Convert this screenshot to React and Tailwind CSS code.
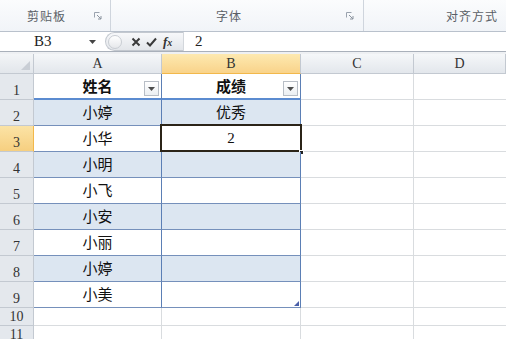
const rows = [
  { n: 1, a: "姓名", b: "成绩", head: true },
  { n: 2, a: "小婷", b: "优秀", band: true },
  { n: 3, a: "小华", b: "2", selected: true },
  { n: 4, a: "小明", b: "", band: true },
  { n: 5, a: "小飞", b: "" },
  { n: 6, a: "小安", b: "", band: true },
  { n: 7, a: "小丽", b: "" },
  { n: 8, a: "小婷", b: "", band: true },
  { n: 9, a: "小美", b: "", last: true },
];

const cjk = { fontFamily: '"Noto Sans CJK SC", "Noto Sans", sans-serif' };
const serif = { fontFamily: '"Liberation Serif", "Noto Sans CJK SC", serif' };

function Launcher() {
  return (
    <svg width="8" height="8" viewBox="0 0 8 8" className="shrink-0">
      <path d="M0.5 0.5h5M0.5 0.5v5" stroke="#9aa3ae" strokeWidth="1" fill="none" />
      <path d="M3 3l4 4M7 4v3H4" stroke="#8a939e" strokeWidth="1" fill="none" />
    </svg>
  );
}

function FilterButton() {
  return (
    <div className="absolute right-[2px] top-[7px] flex h-[15px] w-[15px] items-center justify-center border border-[#b8bec6] bg-gradient-to-b from-white to-[#eceff2]">
      <svg width="7" height="4" viewBox="0 0 7 4">
        <path d="M0 0h7L3.5 4z" fill="#4d4d4d" />
      </svg>
    </div>
  );
}

function Ribbon() {
  return (
    <div className="flex h-[32px] shrink-0 border-b border-[#b9c1cc] bg-gradient-to-b from-[#fbfcfd] to-[#f1f4f8] text-[12px] text-[#5a5f66]" style={cjk}>
      <div className="flex w-[111px] items-center border-r border-[#cfd5dd] pl-[27px] pr-[8px] pt-[1px]">
        <span className="flex-1 tracking-[1px]">剪贴板</span>
        <Launcher />
      </div>
      <div className="flex w-[253px] items-center border-r border-[#cfd5dd] pl-[105px] pr-[9px] pt-[1px]">
        <span className="flex-1 tracking-[1px]">字体</span>
        <Launcher />
      </div>
      <div className="flex flex-1 items-center justify-end pr-[8px] pt-[1px]">
        <span className="tracking-[1px]">对齐方式</span>
      </div>
    </div>
  );
}

function FormulaBar() {
  return (
    <div className="flex h-[20px] shrink-0 border-b border-[#a9b0ba] bg-white">
      <div className="flex w-[105px] items-center">
        <span className="w-[82px] pl-[34px] text-[15px] leading-none text-[#222]" style={serif}>B3</span>
        <svg width="7" height="4" viewBox="0 0 7 4" className="ml-[7px]">
          <path d="M0 0h7L3.5 4z" fill="#444" />
        </svg>
      </div>
      <div className="flex w-[78px] items-center rounded-l-full border border-r-0 border-[#c3c8cf] bg-gradient-to-b from-[#f7f8fa] to-[#e3e6ea]">
        <div className="ml-[2px] h-[14px] w-[14px] rounded-full border border-[#c9cdd3] bg-gradient-to-b from-white to-[#e6e8eb]" />
        <svg width="10" height="10" viewBox="0 0 10 10" className="ml-[9px]">
          <path d="M1.5 1.5l7 7M8.5 1.5l-7 7" stroke="#3a3a3a" strokeWidth="2" />
        </svg>
        <svg width="11" height="10" viewBox="0 0 11 10" className="ml-[5px]">
          <path d="M1 5.5l3 3L10 1.5" stroke="#3a3a3a" strokeWidth="2" fill="none" />
        </svg>
        <span className="ml-[6px] text-[13px] font-bold italic leading-none text-[#333]" style={serif}>
          f<span className="text-[10px]">x</span>
        </span>
      </div>
      <div className="flex flex-1 items-center border-l border-[#d3d7dc] pl-[11px] text-[15px] text-[#222]" style={serif}>
        2
      </div>
    </div>
  );
}

function ColumnHeader() {
  const base = "flex items-center justify-center border-r border-b border-[#c3c9d1] text-[14px] text-[#333]";
  return (
    <div className="flex h-[20px] shrink-0" style={serif}>
      <div className="relative w-[34px] border-r border-b border-[#c3c9d1] bg-gradient-to-b from-[#f3f5f7] to-[#e2e6eb]">
        <svg width="9" height="9" viewBox="0 0 9 9" className="absolute bottom-[3px] right-[3px]">
          <path d="M9 0v9H0z" fill="#c9ced5" />
        </svg>
      </div>
      <div className={`${base} w-[128px] bg-gradient-to-b from-[#f5f7f9] to-[#e3e7ec]`}>A</div>
      <div className={`${base} w-[139px] border-b-[#f2b84b] bg-gradient-to-b from-[#fde9b0] to-[#f9d38a]`}>B</div>
      <div className={`${base} w-[113px] bg-gradient-to-b from-[#f5f7f9] to-[#e3e7ec]`}>C</div>
      <div className={`${base} flex-1 bg-gradient-to-b from-[#f5f7f9] to-[#e3e7ec]`}>D</div>
    </div>
  );
}

function RowHeader({ n, selected, h }) {
  return (
    <div
      className={`flex w-[34px] shrink-0 items-end justify-center border-r border-b border-[#c3c9d1] pb-[1px] text-[14px] leading-none text-[#333] ${
        selected ? "bg-gradient-to-b from-[#fbe3a5] to-[#f6cf80] border-r-[#f2b84b]" : "bg-[#e4e8ed]"
      } ${h}`}
      style={serif}
    >
      {n}
    </div>
  );
}

function TableRow({ r }) {
  const fill = r.head ? "bg-white" : r.band ? "bg-[#dce6f1]" : "bg-white";
  const bottom = r.head ? "border-b-2 border-b-[#5b8bd0]" : "border-b border-b-[#7590bb]";
  return (
    <div className="flex h-[26px] shrink-0">
      <RowHeader n={r.n} selected={r.selected} h="h-[26px]" />
      <div
        className={`relative flex w-[128px] items-center justify-center border-r border-r-[#5b7fb5] ${bottom} ${fill} text-[15px] text-[#111] ${r.head ? "font-bold" : ""}`}
        style={cjk}
      >
        {r.a}
        {r.head && <FilterButton />}
      </div>
      <div
        className={`relative flex w-[139px] items-center justify-center border-r border-r-[#5b7fb5] ${bottom} ${fill} text-[15px] text-[#111] ${r.head ? "font-bold" : ""}`}
        style={r.b === "2" ? serif : cjk}
      >
        {r.b}
        {r.head && <FilterButton />}
        {r.selected && (
          <>
            <div className="absolute inset-x-[-2px] top-[-2px] bottom-[-1px] border-2 border-[#2b2418]" />
            <div className="absolute bottom-[-4px] right-[-4px] h-[5px] w-[5px] border border-white bg-[#222]" />
          </>
        )}
        {r.last && (
          <svg width="5" height="5" viewBox="0 0 5 5" className="absolute bottom-[1px] right-[1px]">
            <path d="M5 0v5H0z" fill="#4a5fa8" />
          </svg>
        )}
      </div>
      <div className="w-[113px] border-r border-b border-[#d9dcdf] bg-white" />
      <div className="flex-1 border-b border-[#d9dcdf] bg-white" />
    </div>
  );
}

function EmptyRow({ n, h }) {
  return (
    <div className={`flex shrink-0 ${h}`}>
      <RowHeader n={n} h={h} />
      <div className="w-[128px] border-r border-b border-[#d9dcdf] bg-white" />
      <div className="w-[139px] border-r border-b border-[#d9dcdf] bg-white" />
      <div className="w-[113px] border-r border-b border-[#d9dcdf] bg-white" />
      <div className="flex-1 border-b border-[#d9dcdf] bg-white" />
    </div>
  );
}

export default function App() {
  return (
    <div className="flex h-[339px] w-[506px] flex-col overflow-hidden bg-white">
      <Ribbon />
      <FormulaBar />
      <div className="h-[2px] shrink-0 bg-[#eef0f3]" />
      <ColumnHeader />
      {rows.map((r) => (
        <TableRow key={r.n} r={r} />
      ))}
      <EmptyRow n={10} h="h-[18px]" />
      <EmptyRow n={11} h="h-[18px]" />
    </div>
  );
}
